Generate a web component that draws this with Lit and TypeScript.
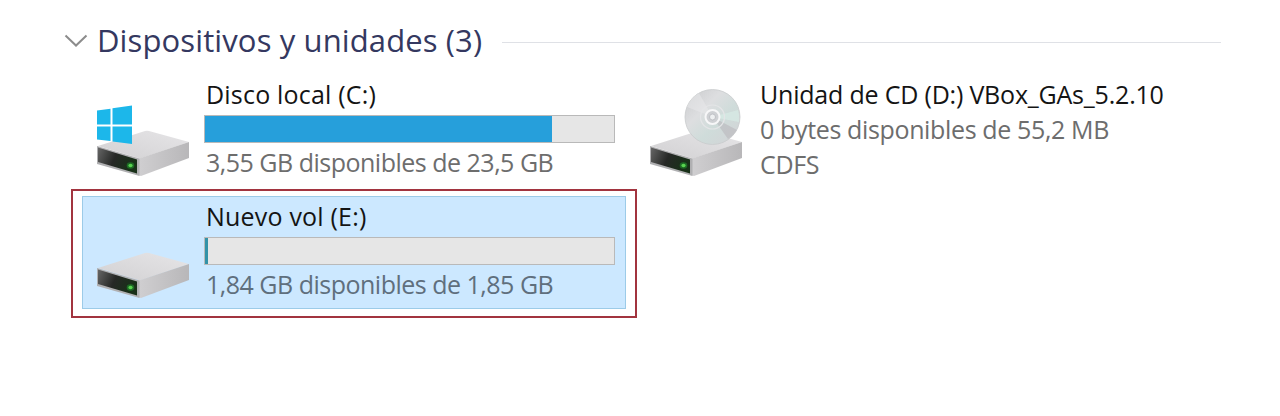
import { LitElement, html, svg, css, nothing } from "lit";
import { customElement, property } from "lit/decorators.js";

@customElement("drive-icon")
class DriveIcon extends LitElement {
  @property() kind = "disk";

  static styles = css`
    :host { display: block; width: 96px; height: 96px; }
    svg { display: block; }
  `;

  render() {
    return html`<svg width="96" height="96" viewBox="0 0 96 96">
      <defs>
        <linearGradient id="top" x1="0" y1="1" x2="1" y2="0">
          <stop offset="0" stop-color="#d2d1d3" /><stop offset="1" stop-color="#e6e5e7" />
        </linearGradient>
        <linearGradient id="side" x1="0" y1="0" x2="1" y2="0">
          <stop offset="0" stop-color="#d0cfd1" /><stop offset="1" stop-color="#b8b7b9" />
        </linearGradient>
        <linearGradient id="front" x1="0" y1="0" x2="1" y2="0.3">
          <stop offset="0" stop-color="#666" /><stop offset="0.5" stop-color="#262826" /><stop offset="1" stop-color="#183018" />
        </linearGradient>
        <linearGradient id="disc" x1="0" y1="0" x2="1" y2="1">
          <stop offset="0" stop-color="#c9cacc" /><stop offset="0.35" stop-color="#dddee0" />
          <stop offset="0.6" stop-color="#cfdcda" /><stop offset="1" stop-color="#d3d2d6" />
        </linearGradient>
      </defs>
      <path d="M2 64 L49 49 Q51 48.500 53 49 L93 60 L44 76.500Z" fill="url(#top)" />
      <path d="M43 76.500 L93 60 V76 L45 94 L42 93Z" fill="url(#side)" />
      <path d="M1 64 L43.500 76.500 V94 L1 82Z" fill="#b0b0b2" />
      <path d="M2 65.500 L41 77.500 V91.500 L2 80Z" fill="url(#front)" />
      <ellipse cx="34.500" cy="83.500" rx="3.800" ry="3.200" fill="#1d6b25" />
      <ellipse cx="34.500" cy="83.500" rx="2.100" ry="1.700" fill="#58d34f" />
      ${this.kind === "system"
        ? svg`<path d="M1 28.500 L14.500 26.700 V42.500 H1Z M16.500 26.300 L36 23.500 V42.500 H16.500Z M1 44.500 H14.500 V59 L1 57.500Z M16.500 44.500 H36 V62 L16.500 59.500Z" fill="#1cb7ea" />`
        : nothing}
      ${this.kind === "cd"
        ? svg`<circle cx="63.500" cy="35" r="27.500" fill="url(#disc)" stroke="#c9cbcd" stroke-width="0.800" />
            <path d="M63.500 35 L38 25 A27.500 27.500 0 0 1 50 11Z" fill="#e9e9eb" opacity="0.5" />
            <path d="M63.500 35 L89 28 A27 27 0 0 1 90 40Z" fill="#d7ebe5" opacity="0.7" />
            <path d="M63.500 35 L88 48 A27 27 0 0 1 79 57Z" fill="#b9b8bd" opacity="0.6" />
            <circle cx="63.500" cy="35" r="12" fill="none" stroke="#e4e5e7" stroke-width="1.200" />
            <circle cx="63.500" cy="35" r="7" fill="#cfd1d4" stroke="#f7f7f8" stroke-width="2" />
            <circle cx="63.500" cy="35" r="3" fill="#eef0f1" stroke="#b6b8bc" stroke-width="0.800" />`
        : nothing}
    </svg>`;
  }
}

@customElement("drive-tile")
class DriveTile extends LitElement {
  @property() kind = "disk";
  @property() name = "";
  @property() detail = "";
  @property() extra = "";
  @property({ type: Number }) used = -1;

  static styles = css`
    :host { display: block; box-sizing: border-box; font-family: "Open Sans", "Noto Sans", sans-serif; white-space: nowrap; }
    .tile { display: flex; gap: 12px; }
    .icon { flex: none; padding-top: 4px; }
    .info { flex: 1; min-width: 0; }
    .name, .detail { font-size: 25px; line-height: 35px; padding-left: 2px; }
    .name { color: #141414; letter-spacing: 0.2px; height: 38px; margin-top: -1px; }
    .detail { color: #6d6d6d; letter-spacing: -0.5px; }
    :host([kind="cd"]) .name { letter-spacing: -0.2px; height: 35px; }
    :host([kind="cd"]) .info { padding-left: 1px; }
    :host([kind="cd"]) .detail { letter-spacing: -0.36px; }
    .bar { box-sizing: border-box; width: 411px; height: 28px; margin-bottom: 2px; border: 1px solid #b9b9b9; background: #e6e6e6; }
    .fill { height: 100%; background: #269fdb; }
    :host([kind="disk"]) .fill { background: #3292a8; }
    :host([kind="disk"]) .detail { color: #5f6f7d; }
  `;

  render() {
    return html`<div class="tile">
      <drive-icon class="icon" kind=${this.kind}></drive-icon>
      <div class="info">
        <div class="name">${this.name}</div>
        ${this.used >= 0
          ? html`<div class="bar"><div class="fill" style="width:${this.used}%"></div></div>`
          : nothing}
        <div class="detail">${this.detail}</div>
        ${this.extra ? html`<div class="detail">${this.extra}</div>` : nothing}
      </div>
    </div>`;
  }
}

@customElement("app-root")
class AppRoot extends LitElement {
  static styles = css`
    :host { display: block; box-sizing: border-box; height: 416px; background: #fff; padding: 18px 59px 0 64px; font-family: "Open Sans", "Noto Sans", sans-serif; }
    .heading { display: flex; align-items: center; height: 46px; }
    .chevron { flex: none; width: 24px; height: 16px; margin-right: 9px; }
    .title { flex: none; width: 405px; font-size: 31px; line-height: 44px; height: 46px; color: #343860; letter-spacing: 0.12px; white-space: nowrap; }
    .rule { flex: 1; height: 1px; margin-top: 2px; background: #dfe1e6; }
    .grid { display: grid; grid-template-columns: 573px 1fr; padding-left: 7px; margin-top: 14px; }
    .first { margin-left: 25px; height: 111px; }
    .cd { margin-left: 5px; }
    .marker { box-sizing: border-box; width: 566px; height: 129px; border: 2px solid #a2343f; padding: 5px 9px 7px 9px; }
    .selected { height: 113px; padding: 3px 0 0 13px; border: 1px solid #9ccbe8; background: #cce8ff; }
  `;

  render() {
    return html`
      <div class="heading">
        <svg class="chevron" viewBox="0 0 24 16"><path d="M1.500 2.500 L12 12.500 L22.500 2.500" fill="none" stroke="#8c8c8c" stroke-width="2" /></svg>
        <div class="title">Dispositivos y unidades (3)</div>
        <div class="rule"></div>
      </div>
      <div class="grid">
        <drive-tile class="first" kind="system" name="Disco local (C:)" detail="3,55 GB disponibles de 23,5 GB" used="84.9"></drive-tile>
        <drive-tile class="cd" kind="cd" name="Unidad de CD (D:) VBox_GAs_5.2.10" detail="0 bytes disponibles de 55,2 MB" extra="CDFS"></drive-tile>
        <div class="marker">
          <drive-tile class="selected" kind="disk" name="Nuevo vol (E:)" detail="1,84 GB disponibles de 1,85 GB" used="0.8"></drive-tile>
        </div>
      </div>
    `;
  }
}
